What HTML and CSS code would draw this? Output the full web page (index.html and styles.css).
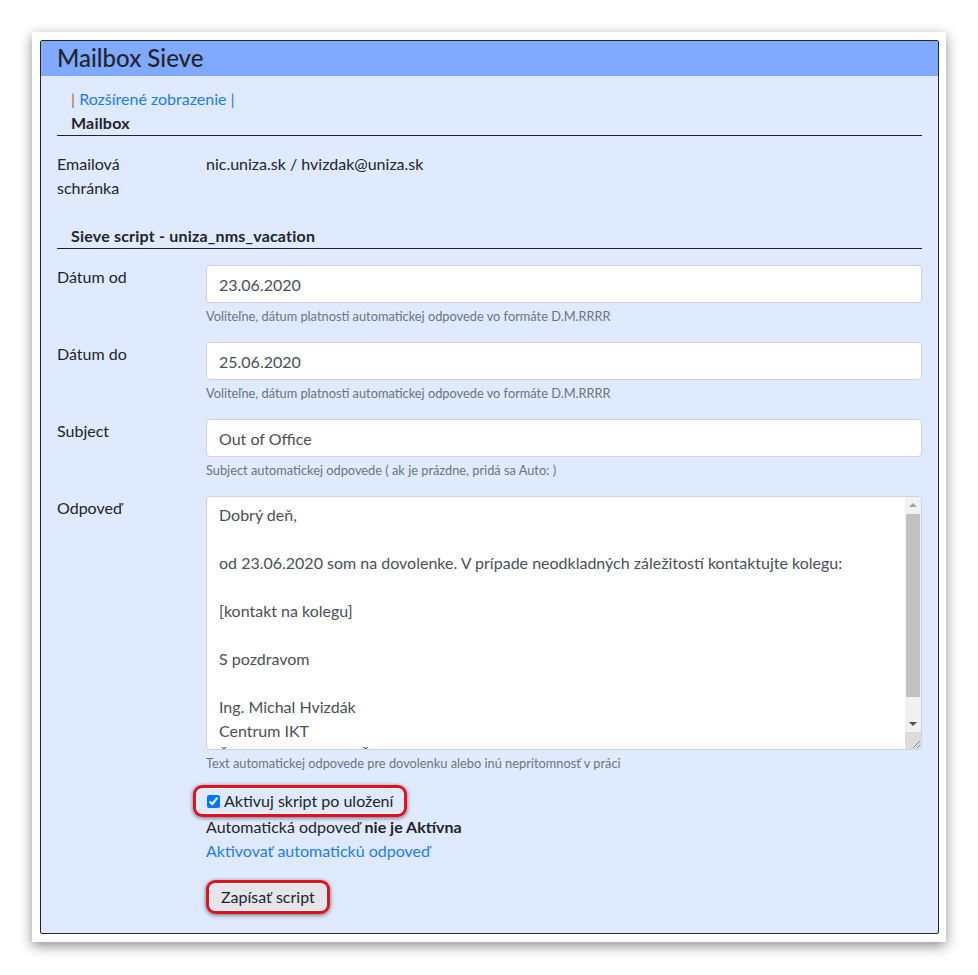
FILE: index.html
```html
<!DOCTYPE html>
<html lang="sk">

<head>
  <meta charset="UTF-8">
  <meta name="viewport" content="width=device-width, initial-scale=1.0">
  <title>Mailbox Sieve</title>
  <link rel="stylesheet" href="styles.css">
</head>

<body>
  <div class="sheet">
    <div class="panel">
      <div class="panel-head">
        <h1>Mailbox Sieve</h1>
      </div>

      <div class="panel-body">
        <div class="crumbs">
          <span class="pipe-a">|</span> <a href="#">Rozšírené zobrazenie</a> <span class="pipe-b">|</span>
        </div>
        <div class="section">Mailbox</div>

        <div class="row info">
          <div class="label">Emailová schránka</div>
          <div class="field">nic.uniza.sk / hvizdak@uniza.sk</div>
        </div>

        <div class="section">Sieve script - uniza_nms_vacation</div>

        <!-- formular -->
        <form class="form" onsubmit="return false">
          <div class="row">
            <label class="label" for="date-from">Dátum od</label>
            <div class="field">
              <input id="date-from" class="control" type="text" value="23.06.2020">
              <small class="help">Voliteľne, dátum platnosti automatickej odpovede vo formáte D.M.RRRR</small>
            </div>
          </div>

          <div class="row">
            <label class="label" for="date-to">Dátum do</label>
            <div class="field">
              <input id="date-to" class="control" type="text" value="25.06.2020">
              <small class="help">Voliteľne, dátum platnosti automatickej odpovede vo formáte D.M.RRRR</small>
            </div>
          </div>

          <div class="row">
            <label class="label" for="subject">Subject</label>
            <div class="field">
              <input id="subject" class="control" type="text" value="Out of Office">
              <small class="help">Subject automatickej odpovede ( ak je prázdne, pridá sa Auto: )</small>
            </div>
          </div>

          <div class="row">
            <label class="label" for="reply">Odpoveď</label>
            <div class="field">
              <div class="reply-box">
                <textarea id="reply" class="control reply">Dobrý deň,

od 23.06.2020 som na dovolenke. V prípade neodkladných záležitostí kontaktujte kolegu:

[kontakt na kolegu]

S pozdravom

Ing. Michal Hvizdák
Centrum IKT
Žilinská univerzita v Žiline</textarea>
                <!-- posuvnik -->
                <div class="scrollbar">
                  <span class="arrow up"></span>
                  <span class="track"><span class="thumb"></span></span>
                  <span class="arrow down"></span>
                  <span class="grip">
                    <svg width="10" height="10" viewBox="0 0 10 10">
                      <path d="M2 9 L9 2 M6 9 L9 6" stroke="#8a8a8a" stroke-width="1" fill="none" />
                    </svg>
                  </span>
                </div>
              </div>
              <small class="help">Text automatickej odpovede pre dovolenku alebo inú neprítomnosť v práci</small>
            </div>
          </div>

          <div class="row last">
            <div class="label"></div>
            <div class="field actions">
              <span class="mark">
                <label class="check"><input type="checkbox" checked> Aktivuj skript po uložení</label>
              </span>
              <div class="state">Automatická odpoveď <b>nie je Aktívna</b></div>
              <a href="#">Aktivovať automatickú odpoveď</a>
              <span class="mark save">
                <button type="submit">Zapísať script</button>
              </span>
            </div>
          </div>
        </form>
      </div>
    </div>
  </div>
</body>

</html>
```

FILE: styles.css
```css
body {
  margin: 0;
  padding: 32px 32px 35px 32px;
  background: #fff;
  font-family: "Segoe UI", Lato, "Noto Sans", sans-serif;
  font-size: 16px;
  line-height: 24px;
  color: #212529;
}

.sheet {
  background: #fff;
  padding: 8px 7px 8px 8px;
  box-shadow: 0 4px 12px rgba(0, 0, 0, 0.45);
}

.panel {
  border: 1px solid #23262b;
  border-radius: 2px;
  background-color: #dfe9ff;
}

.panel-head {
  background-color: #80aaff;
  height: 35px;
  padding: 0 16px;
}

h1 {
  margin: 0;
  font-size: 24px;
  font-weight: 500;
  line-height: 34px;
}

.panel-body {
  padding: 11px 16px 8px 16px;
}

a {
  color: #1a7cf5;
  text-decoration: none;
}

.crumbs {
  padding-left: 14px;
}

.pipe-a {
  color: #b06a1c;
}

.pipe-b {
  color: #1a7cf5;
}

.section {
  padding-left: 14px;
  font-weight: bold;
  letter-spacing: 0.2px;
  border-bottom: 1px solid #212529;
}

.row {
  display: flex;
  margin-bottom: 16px;
}

.info {
  margin-top: 16px;
  margin-bottom: 24px;
}

.label {
  width: 149px;
  flex-shrink: 0;
  padding-right: 30px;
  box-sizing: border-box;
}

.field {
  flex: 1;
  display: flex;
  flex-direction: column;
}

.form {
  margin-top: 16px;
}

.control {
  display: block;
  box-sizing: border-box;
  width: 100%;
  height: 38px;
  padding: 6px 12px;
  font-family: inherit;
  font-size: 16px;
  line-height: 24px;
  color: #495057;
  background: #fff;
  border: 1px solid #ced4da;
  border-radius: 4px;
}

.reply-box {
  position: relative;
}

.reply {
  height: 254px;
  padding-right: 30px;
  resize: none;
  overflow: hidden;
}

.scrollbar {
  position: absolute;
  top: 1px;
  right: 1px;
  bottom: 1px;
  width: 16px;
  display: flex;
  flex-direction: column;
  background: #f1f1f1;
  border-radius: 0 3px 3px 0;
}

.arrow {
  height: 17px;
  flex-shrink: 0;
  position: relative;
}

.arrow::before {
  content: "";
  position: absolute;
  left: 4px;
  top: 6px;
  border-left: 4px solid transparent;
  border-right: 4px solid transparent;
}

.arrow.up::before {
  border-bottom: 4px solid #a3a3a3;
}

.arrow.down::before {
  top: 7px;
  border-top: 4px solid #505050;
}

.track {
  flex: 1;
  padding: 0 1px;
}

.thumb {
  display: block;
  height: 183px;
  background: #c1c1c1;
}

.grip {
  height: 17px;
  flex-shrink: 0;
  background: #dcdcdc;
  display: flex;
  align-items: flex-end;
  justify-content: flex-end;
  border-radius: 0 0 3px 0;
}

.grip svg {
  display: block;
}

.help {
  margin-top: 4px;
  font-size: 12.8px;
  line-height: 19px;
  color: #6c757d;
}

.last {
  margin-bottom: 0;
}

.actions {
  align-items: flex-start;
}

.state {
  margin-top: 2px;
}

.check {
  display: flex;
  align-items: center;
  gap: 4px;
}

.check input {
  margin: 0 0 0 1px;
  width: 13px;
  height: 13px;
}

.mark {
  position: relative;
  display: inline-block;
}

/* cervene oznacenie */
.mark::after {
  content: "";
  position: absolute;
  left: -13px;
  right: -14px;
  top: -4px;
  bottom: -4px;
  border: 3px solid #e4101c;
  border-radius: 9px;
  box-shadow: 0 1px 4px rgba(0, 0, 0, 0.55), inset 0 0 0 1px #fff;
  pointer-events: none;
}

.save {
  margin-top: 20px;
  margin-left: 3px;
  margin-bottom: 14px;
}

.save::after {
  left: -3px;
  right: -3px;
  top: -3px;
  bottom: -3px;
}

button {
  font-family: inherit;
  font-size: 16px;
  line-height: 20px;
  color: #212529;
  background: #e4e6eb;
  border: 1px solid #aab;
  border-radius: 3px;
  padding: 3px 11px;
}
```
